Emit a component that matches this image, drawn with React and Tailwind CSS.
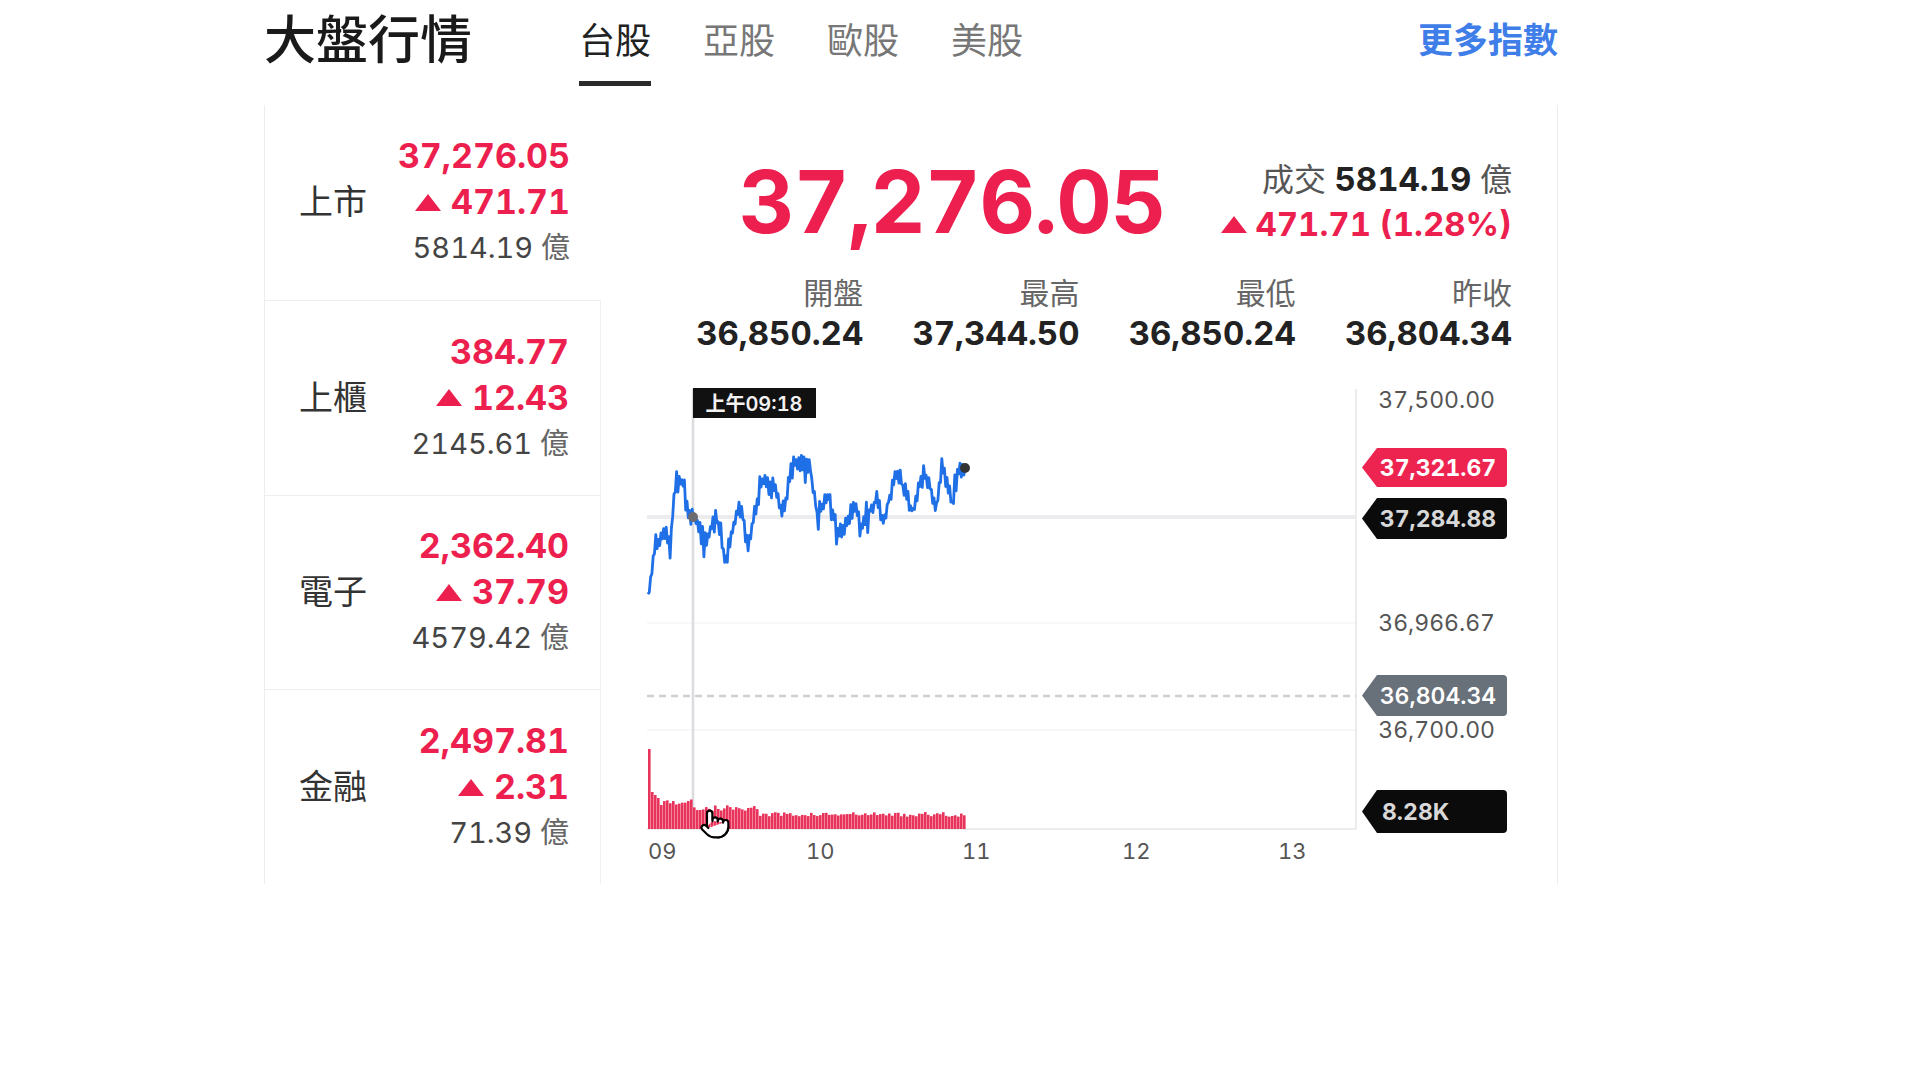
import React from 'react';
import { Pointer } from 'lucide-react';

const RED = '#ec1f4e';

const markets = [
  { name: '上市', price: '37,276.05', change: '471.71', volume: '5814.19' },
  { name: '上櫃', price: '384.77', change: '12.43', volume: '2145.61' },
  { name: '電子', price: '2,362.40', change: '37.79', volume: '4579.42' },
  { name: '金融', price: '2,497.81', change: '2.31', volume: '71.39' },
];

const stats = [
  { label: '開盤', value: '36,850.24' },
  { label: '最高', value: '37,344.50' },
  { label: '最低', value: '36,850.24' },
  { label: '昨收', value: '36,804.34' },
];

const tabs = ['台股', '亞股', '歐股', '美股'];

// rough shape of the intraday line, in chart coords
const keys = [
  [1, 223], [8, 163], [20, 153], [23, 167], [28, 110], [36, 98], [41, 133], [46, 137],
  [60, 163], [68, 130], [78, 180], [93, 123], [101, 163], [115, 103], [126, 107],
  [136, 133], [146, 80], [163, 87], [170, 133], [183, 117], [191, 157], [210, 123],
  [213, 153], [230, 117], [236, 143], [250, 90], [266, 133], [276, 90], [290, 127],
  [295, 87], [306, 127], [311, 90], [318, 88],
];

function rng(seed) {
  let s = seed;
  return () => {
    s = (s * 16807) % 2147483647;
    return (s - 1) / 2147483646;
  };
}

function buildLine() {
  const r = rng(11);
  const pts = [];
  let sign = 1;
  for (let x = 1; x < 318; x += 1.3) {
    let i = 0;
    while (i < keys.length - 2 && keys[i + 1][0] < x) i++;
    const [x0, y0] = keys[i];
    const [x1, y1] = keys[i + 1];
    const t = Math.min(1, Math.max(0, (x - x0) / (x1 - x0)));
    sign = -sign;
    const spike = r() < 0.2 ? 20 : 9;
    const y = y0 + (y1 - y0) * t + sign * r() * spike;
    pts.push(`${x.toFixed(1)},${y.toFixed(1)}`);
  }
  pts.push('318,88');
  return 'M' + pts.join(' L');
}

function buildBars() {
  const r = rng(5);
  const bars = [];
  for (let i = 0; i < 106; i++) {
    const x = 1 + i * 3;
    let h;
    if (i === 0) h = 80;
    else if (i < 4) h = 40 - i * 3;
    else if (x < 45) h = 24 + r() * 6;
    else if (x < 110) h = 18 + r() * 6;
    else h = 12 + r() * 5;
    bars.push({ x, h });
  }
  return bars;
}

const linePath = buildLine();
const bars = buildBars();

function tagPath(x0, x1, y0, y1) {
  const m = (y0 + y1) / 2;
  return `M${x0 + 15},${y0} H${x1 - 4} Q${x1},${y0} ${x1},${y0 + 4} V${y1 - 4} Q${x1},${y1} ${x1 - 4},${y1} H${x0 + 15} L${x0},${m} Z`;
}

function Up({ className }) {
  return (
    <svg viewBox="0 0 26 17" className={className}>
      <polygon points="13,0 26,17 0,17" fill="currentColor" />
    </svg>
  );
}

function Chart() {
  return (
    <div className="relative mt-[27px] h-[485px] w-[865px]">
      <svg width="865" height="485" viewBox="0 0 865 485" className="block" style={{ fontVariantNumeric: 'tabular-nums' }}>
        {/* grid */}
        <line x1="0" y1="243" x2="709" y2="243" stroke="#f5f5f7" strokeWidth="1.5" />
        <line x1="0" y1="350" x2="709" y2="350" stroke="#f5f5f7" strokeWidth="1.5" />
        <line x1="0" y1="449" x2="709" y2="449" stroke="#ececef" strokeWidth="2" />
        <line x1="709" y1="9" x2="709" y2="449" stroke="#e6e6ea" strokeWidth="1.5" />
        {/* prev close */}
        <line x1="0" y1="316" x2="709" y2="316" stroke="#cfcfd4" strokeWidth="2.5" strokeDasharray="7 5" />
        {/* crosshair */}
        <line x1="0" y1="137" x2="709" y2="137" stroke="#ececef" strokeWidth="4" />
        <line x1="46" y1="9" x2="46" y2="449" stroke="#dcdce0" strokeWidth="2.5" />

        {/* volume */}
        {bars.map((b) => (
          <rect key={b.x} x={b.x} y={449 - b.h} width="2.6" height={b.h} fill="#e8345b" />
        ))}

        {/* price */}
        <path d={linePath} fill="none" stroke="#1f6fe6" strokeWidth="2.8" strokeLinejoin="round" />
        <circle cx="46" cy="137" r="5" fill="#6b6b70" />
        <circle cx="318" cy="88" r="5" fill="#333" />

        {/* tooltip */}
        <rect x="46" y="8" width="123" height="30" fill="#111" />
        <text x="107" y="24" textAnchor="middle" dominantBaseline="central" fill="#f2f2f2" fontSize="20" fontWeight="600">
          上午09:18
        </text>

        {/* y axis labels */}
        <g fill="#555" fontSize="23">
          <text x="848" y="20" textAnchor="end" dominantBaseline="central">37,500.00</text>
          <text x="848" y="243" textAnchor="end" dominantBaseline="central">36,966.67</text>
          <text x="848" y="350" textAnchor="end" dominantBaseline="central">36,700.00</text>
        </g>

        {/* tags */}
        <path d={tagPath(715, 860, 68, 107)} fill="#ee2450" />
        <text x="791" y="88" textAnchor="middle" dominantBaseline="central" fill="#fff" fontSize="23" fontWeight="700">37,321.67</text>
        <path d={tagPath(715, 860, 118, 159)} fill="#0b0b0b" />
        <text x="791" y="139" textAnchor="middle" dominantBaseline="central" fill="#d8d8d8" fontSize="23" fontWeight="700">37,284.88</text>
        <path d={tagPath(715, 860, 295, 336)} fill="#687079" />
        <text x="791" y="316" textAnchor="middle" dominantBaseline="central" fill="#fff" fontSize="23" fontWeight="600">36,804.34</text>
        <path d={tagPath(715, 860, 410, 453)} fill="#0b0b0b" />
        <text x="735" y="432" dominantBaseline="central" fill="#d8d8d8" fontSize="23" fontWeight="700">8.28K</text>

        {/* x axis */}
        <g fill="#555" fontSize="22">
          <text x="1" y="471" dominantBaseline="central">09</text>
          <text x="159" y="471" dominantBaseline="central">10</text>
          <text x="315" y="471" dominantBaseline="central">11</text>
          <text x="475" y="471" dominantBaseline="central">12</text>
          <text x="631" y="471" dominantBaseline="central">13</text>
        </g>
      </svg>
      <Pointer className="absolute left-[52px] top-[428px] h-[32px] w-[32px] fill-white text-black" strokeWidth={1.6} />
    </div>
  );
}

export default function App() {
  return (
    <div className="min-h-screen bg-white font-['Inter','Noto_Sans_CJK_TC',sans-serif] tabular-nums text-[#222]">
      <div className="ml-[264px] w-[1294px]">
        {/* header */}
        <div className="flex h-[105px] items-start">
          <h1 className="mt-[15px] text-[52px] font-medium leading-[52px] text-[#1a1a1a]">大盤行情</h1>
          <div className="ml-[107px] mt-[23px] flex gap-[52px]">
            {tabs.map((t, i) => (
              <div key={t} className="flex flex-col items-center">
                <span className={`text-[36px] leading-[36px] ${i === 0 ? 'text-[#222]' : 'text-[#777]'}`}>{t}</span>
                <span className={`mt-[22px] h-[5px] w-full ${i === 0 ? 'bg-[#2b2b2b]' : 'bg-transparent'}`}></span>
              </div>
            ))}
          </div>
          <a className="ml-auto mt-[22px] text-[35px] font-bold leading-[36px] text-[#3f7ee8]">更多指數</a>
        </div>

        {/* panel */}
        <div className="flex h-[779px] border-x border-[#ececef]">
          <div className="flex w-[337px] flex-col">
            {markets.map((m, i) => (
              <div
                key={m.name}
                className={`flex h-[195px] items-center justify-between pl-[34px] pr-[31px] ${i > 0 ? 'border-r border-t border-[#efeff2]' : ''}`}
              >
                <span className="text-[34px] leading-none text-[#333]">{m.name}</span>
                <div className="flex flex-col items-end">
                  <span className="text-[34px] font-bold leading-[46px]" style={{ color: RED }}>{m.price}</span>
                  <span className="flex items-center gap-[10px] text-[34px] font-bold leading-[46px]" style={{ color: RED }}>
                    <Up className="h-[17px] w-[26px]" />
                    {m.change}
                  </span>
                  <span className="text-[29px] leading-[46px] text-[#444]">
                    {m.volume} <span className="text-[#666]">億</span>
                  </span>
                </div>
              </div>
            ))}
          </div>

          <div className="flex-1 pl-[46px] pr-[45px]">
            <div className="mt-[50px] flex h-[94px] items-center justify-end gap-[56px]">
              <span className="text-[86px] font-bold leading-none tracking-[-1px]" style={{ color: RED }}>37,276.05</span>
              <div className="flex flex-col items-end">
                <span className="text-[32px] leading-[45px] text-[#555]">
                  成交 <span className="text-[33px] font-bold text-[#222]">5814.19</span> 億
                </span>
                <span className="flex items-center gap-[8px] text-[33px] font-bold leading-[45px]" style={{ color: RED }}>
                  <Up className="h-[17px] w-[26px]" />
                  471.71 (1.28%)
                </span>
              </div>
            </div>

            <div className="mt-[26px] grid grid-cols-4">
              {stats.map((s) => (
                <div key={s.label} className="flex flex-col items-end">
                  <span className="text-[30px] leading-[36px] text-[#666]">{s.label}</span>
                  <span className="mt-[2px] text-[33px] font-bold leading-[40px] text-[#222]">{s.value}</span>
                </div>
              ))}
            </div>

            <Chart />
          </div>
        </div>
      </div>
    </div>
  );
}
